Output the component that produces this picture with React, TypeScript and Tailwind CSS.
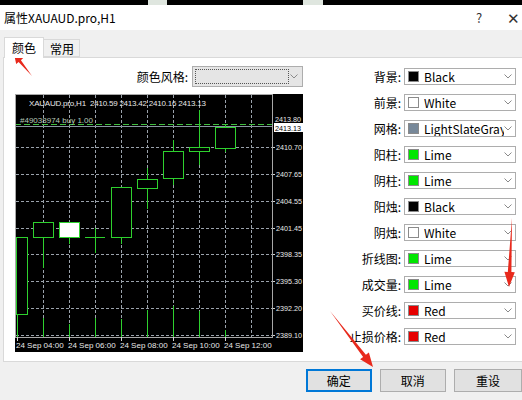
import React from 'react'

interface ColorRow {
  label: string
  color: string
  name: string
}

const rows: ColorRow[] = [
  { label: '背景:', color: '#000000', name: 'Black' },
  { label: '前景:', color: '#ffffff', name: 'White' },
  { label: '网格:', color: '#778899', name: 'LightSlateGray' },
  { label: '阳柱:', color: '#00e600', name: 'Lime' },
  { label: '阴柱:', color: '#00e600', name: 'Lime' },
  { label: '阳烛:', color: '#000000', name: 'Black' },
  { label: '阴烛:', color: '#ffffff', name: 'White' },
  { label: '折线图:', color: '#00e600', name: 'Lime' },
  { label: '成交量:', color: '#00e600', name: 'Lime' },
  { label: '买价线:', color: '#e60000', name: 'Red' },
  { label: '止损价格:', color: '#e60000', name: 'Red' },
]

// chart geometry, local to the chart box
const vGrid = [28, 54, 80, 106, 132, 158, 184, 210, 236]
const hGrid = [53, 80, 107, 134, 160, 187, 214, 241]
const prices: [string, number][] = [
  ['2410.70', 53],
  ['2407.65', 80],
  ['2404.55', 107],
  ['2401.45', 134],
  ['2398.35', 160],
  ['2395.30', 187],
  ['2392.20', 214],
  ['2389.10', 241],
]
const times = ['24 Sep 04:00', '24 Sep 06:00', '24 Sep 08:00', '24 Sep 10:00', '24 Sep 12:00']

// x center, box top/bottom, wick top/bottom, filled, volume top
const candles = [
  { x: 2, t: 143, b: 220, wt: 143, wb: 220, fill: false, v: 220 },
  { x: 28, t: 128, b: 143, wt: 128, wb: 174, fill: false, v: 224 },
  { x: 54, t: 128, b: 143, wt: 128, wb: 150, fill: true, v: 230 },
  { x: 80, t: 143, b: 143, wt: 134, wb: 159, fill: false, v: 224 },
  { x: 106, t: 93, b: 143, wt: 93, wb: 150, fill: false, v: 225 },
  { x: 132, t: 85, b: 94, wt: 74, wb: 115, fill: false, v: 216 },
  { x: 158, t: 57, b: 84, wt: 46, wb: 91, fill: false, v: 212 },
  { x: 184, t: 53, b: 57, wt: 16, wb: 71, fill: false, v: 217 },
  { x: 210, t: 33, b: 54, wt: 30, wb: 58, fill: false, v: 236 },
]

const green = '#2ed12e'

function Chevron() {
  return (
    <svg width="8" height="5" viewBox="0 0 8 5" className="shrink-0">
      <path d="M0.5 0.5 L4 4 L7.5 0.5" fill="none" stroke="#8a8a8a" strokeWidth="1" />
    </svg>
  )
}

function Chart() {
  return (
    <svg width="288" height="258" viewBox="0 0 288 258" className="block bg-black">
      {vGrid.map((x) => (
        <line key={'v' + x} x1={x + 0.5} y1={1} x2={x + 0.5} y2={243} stroke="#9aa2ab" strokeDasharray="3 2" />
      ))}
      {hGrid.map((y) => (
        <line key={'h' + y} x1={1} y1={y + 0.5} x2={257} y2={y + 0.5} stroke="#9aa2ab" strokeDasharray="3 2" />
      ))}
      <line x1={0} y1={30.5} x2={288} y2={30.5} stroke="#3fbf3f" strokeDasharray="6 3" />
      <line x1={0} y1={32.5} x2={258} y2={32.5} stroke="#8a96a3" />
      <rect x={0.5} y={0.5} width={257} height={243} fill="none" stroke="#a8a8a8" />

      {candles.map((c) => (
        <g key={c.x}>
          <line x1={c.x + 0.5} y1={c.v} x2={c.x + 0.5} y2={243} stroke={green} />
          <line x1={c.x + 0.5} y1={c.wt} x2={c.x + 0.5} y2={c.wb} stroke={green} />
          {c.t === c.b ? (
            <line x1={c.x - 10} y1={c.t + 0.5} x2={c.x + 10} y2={c.t + 0.5} stroke={green} />
          ) : (
            <rect
              x={Math.max(c.x - 10, 1) + 0.5}
              y={c.t + 0.5}
              width={c.x - 10 < 1 ? c.x + 9 : 20}
              height={c.b - c.t}
              fill={c.fill ? '#ffffff' : '#000000'}
              stroke={green}
            />
          )}
        </g>
      ))}

      <g fontFamily="'Liberation Sans', Arial, sans-serif" fontSize="8">
        <text x={14} y={12} fill="#e8e8e8" textLength={177} lengthAdjust="spacing">
          XAUAUD.pro,H1 {'\u00a0'}2410.59 2413.42 2410.16 2413.13
        </text>
        <text x={5} y={29} fill="#b8c8b8">
          #49038974 buy 1.00
        </text>
        <text x={260} y={28} fill="#e8e8e8" textLength={26} lengthAdjust="spacingAndGlyphs">
          2413.80
        </text>
        <rect x={259} y={29} width={29} height={9} fill="#ffffff" />
        <text x={260} y={37} fill="#000000" textLength={26} lengthAdjust="spacingAndGlyphs">
          2413.13
        </text>
        {prices.map(([p, y]) => (
          <g key={p}>
            <line x1={258} y1={y + 0.5} x2={260} y2={y + 0.5} stroke="#d0d0d0" />
            <text x={261} y={y + 3} fill="#e8e8e8" textLength={26} lengthAdjust="spacingAndGlyphs">
              {p}
            </text>
          </g>
        ))}
        {times.map((t, i) => (
          <g key={t}>
            <line x1={2.5 + i * 52} y1={243} x2={2.5 + i * 52} y2={247} stroke="#d0d0d0" />
            <text x={1 + i * 52} y={254} fill="#e8e8e8">
              {t}
            </text>
          </g>
        ))}
      </g>
    </svg>
  )
}

function Arrows() {
  return (
    <svg width="522" height="400" className="absolute left-0 top-0 pointer-events-none">
      <polygon points="32,76 20.9,60.2 23.2,58.1 14,54 16.2,63.9 18.6,62" fill="#e8291c" />
      <polygon points="512,218 511.4,272 514.8,272.2 509,287 504.4,271.8 507.8,272" fill="#e8291c" />
      <polygon points="330,311 365.9,354.8 368.9,352.5 373,367 360.1,359.3 363.1,357" fill="#e8291c" />
    </svg>
  )
}

export default function App() {
  return (
    <div className="relative w-[522px] h-[400px] overflow-hidden bg-[#f0f0f0] text-[12px] text-black font-['Noto_Sans_CJK_SC','Noto_Sans',sans-serif]">
      <div className="h-[5px] bg-black flex">
        <div className="ml-[148px] w-[19px] bg-[#dfe6df]" />
        <div className="ml-[136px] w-[20px] bg-[#dfe6df]" />
      </div>

      <div className="h-[25px] bg-white flex items-center pl-[4px]">
        <div className="flex-1">属性XAUAUD.pro,H1</div>
        <div className="w-[31px] text-[13px] text-[#333]">?</div>
        <div className="w-[13px] text-[15px] leading-none text-[#333] mr-[2px]">✕</div>
      </div>

      <div className="pt-[7px] pl-[3px]">
        <div className="flex items-end h-[20px] pl-[1px]">
          <div className="relative z-10 -mb-px w-[40px] h-[21px] bg-white border border-b-0 border-[#d9d9d9] pl-[7px] leading-[20px]">
            颜色
          </div>
          <div className="w-[36px] h-[18px] bg-[#f0f0f0] border border-l-0 border-[#d9d9d9] pl-[6px] leading-[17px]">
            常用
          </div>
        </div>

        <div className="w-[540px] h-[305px] bg-white border border-[#d9d9d9] flex pl-[11px] pt-[8px]">
          <div className="w-[288px] flex flex-col">
            <div className="h-[21px] flex items-center justify-end gap-[4px]">
              <span>颜色风格:</span>
              <div className="w-[111px] h-[21px] bg-[#e5e5e5] border border-[#adadad] flex items-center pl-[2px] pr-[4px]">
                <div className="w-[94px] h-[15px] border border-dotted border-[#555]" />
                <div className="flex-1" />
                <Chevron />
              </div>
            </div>
            <div className="mt-[7px]">
              <Chart />
            </div>
          </div>

          <div className="ml-[42px] mt-[2px] flex flex-col gap-[9px]">
            {rows.map((r) => (
              <div key={r.label} className="h-[17px] flex items-center gap-[3px]">
                <span className="w-[56px] text-right">{r.label}</span>
                <div className="w-[112px] h-[17px] bg-white border border-[#adadad] flex items-center pl-[3px] pr-[3px]">
                  <span className="w-[11px] h-[11px] border border-[#8a8a8a] shrink-0" style={{ backgroundColor: r.color }} />
                  <span className="ml-[5px] flex-1 overflow-hidden whitespace-nowrap leading-[15px]">{r.name}</span>
                  <Chevron />
                </div>
              </div>
            ))}
          </div>
        </div>

        <div className="flex pl-[303px] mt-[7px] gap-[8px]">
          <button className="w-[68px] h-[23px] bg-[#e1e1e1] border-2 border-[#0078d7]">确定</button>
          <button className="w-[69px] h-[23px] bg-[#e1e1e1] border border-[#adadad]">取消</button>
          <button className="w-[68px] h-[23px] bg-[#e1e1e1] border border-[#adadad] shrink-0">重设</button>
        </div>
      </div>

      <Arrows />
    </div>
  )
}
